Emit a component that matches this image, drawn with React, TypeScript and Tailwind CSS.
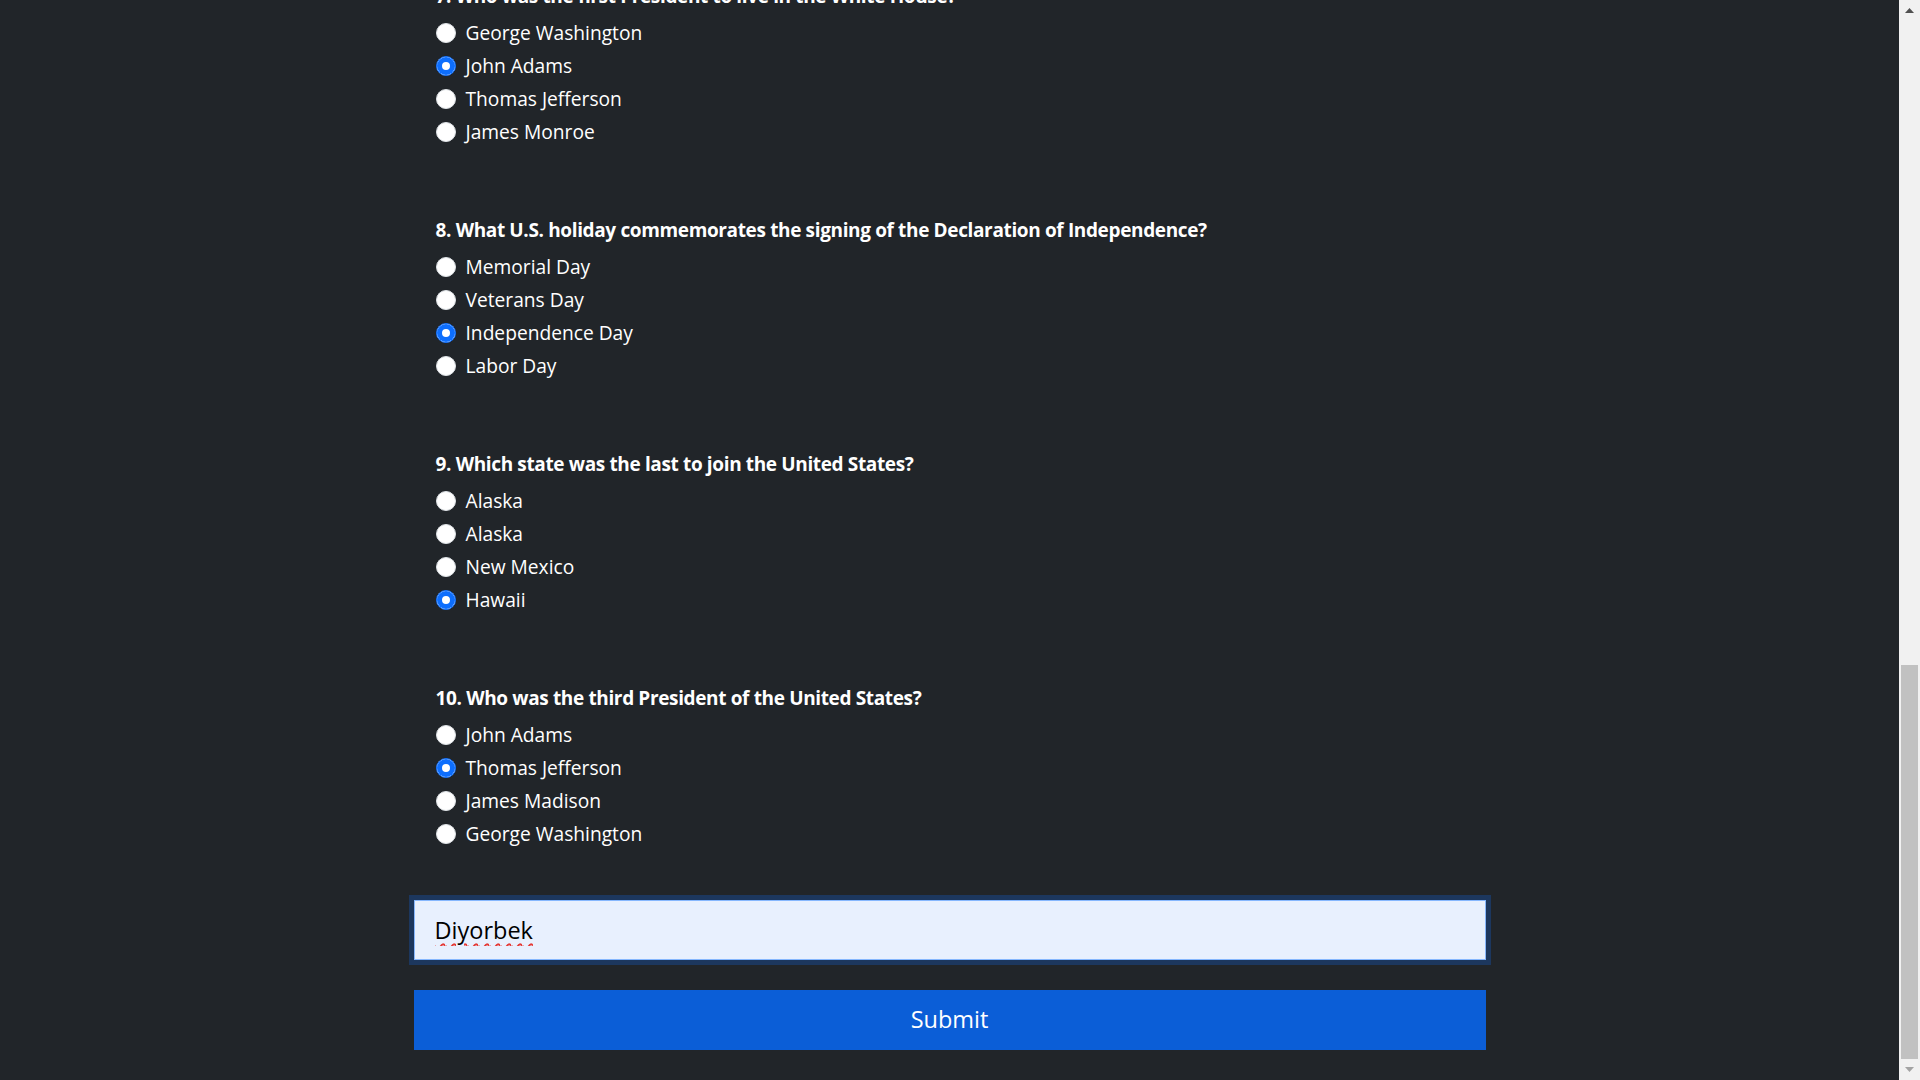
import { useLayoutEffect, useRef, useState } from 'react';

type Question = { q: string; options: string[]; answer: number };

const questions: Question[] = [
  {
    q: 'Who was the first President of the United States?',
    options: ['Thomas Jefferson', 'George Washington', 'John Adams', 'Abraham Lincoln'],
    answer: 1,
  },
  {
    q: 'In what year was the Declaration of Independence signed?',
    options: ['1776', '1789', '1812', '1865'],
    answer: 0,
  },
  {
    q: 'What is the capital of the United States?',
    options: ['New York', 'Philadelphia', 'Washington, D.C.', 'Boston'],
    answer: 2,
  },
  {
    q: 'How many stars are on the U.S. flag?',
    options: ['13', '48', '50', '52'],
    answer: 2,
  },
  {
    q: 'Who wrote the Declaration of Independence?',
    options: ['Benjamin Franklin', 'Thomas Jefferson', 'John Hancock', 'James Madison'],
    answer: 1,
  },
  {
    q: 'Which President issued the Emancipation Proclamation?',
    options: ['Ulysses S. Grant', 'Andrew Johnson', 'Abraham Lincoln', 'James Buchanan'],
    answer: 2,
  },
  {
    q: 'Who was the first President to live in the White House?',
    options: ['George Washington', 'John Adams', 'Thomas Jefferson', 'James Monroe'],
    answer: 1,
  },
  {
    q: 'What U.S. holiday commemorates the signing of the Declaration of Independence?',
    options: ['Memorial Day', 'Veterans Day', 'Independence Day', 'Labor Day'],
    answer: 2,
  },
  {
    q: 'Which state was the last to join the United States?',
    options: ['Alaska', 'Alaska', 'New Mexico', 'Hawaii'],
    answer: 3,
  },
  {
    q: 'Who was the third President of the United States?',
    options: ['John Adams', 'Thomas Jefferson', 'James Madison', 'George Washington'],
    answer: 1,
  },
];

function QuestionBlock({ item, index }: { item: Question; index: number }) {
  const [picked, setPicked] = useState(item.answer);

  return (
    <div className="px-[22px]">
      <div className="mb-[5px] text-[19px] leading-[30px] font-bold tracking-[-0.36px] text-white">
        {index + 1}. {item.q}
      </div>
      {item.options.map((opt, i) => (
        <label key={i} className="flex h-[33px] items-center text-[19.2px] leading-[30px] text-white">
          <input
            type="radio"
            name={`q${index}`}
            checked={picked === i}
            onChange={() => setPicked(i)}
            className="size-5 shrink-0 appearance-none rounded-full border border-[#dee2e6] bg-white checked:border-[#0d6efd] checked:shadow-[inset_0_0_0_5px_#0d6efd]"
          />
          <span className="ml-[10px]">{opt}</span>
        </label>
      ))}
    </div>
  );
}

// page scrollbar, drawn since the headless window hides its own
function ScrollRail() {
  return (
    <div className="flex w-[21px] shrink-0 flex-col bg-[#f1f1f1]">
      <div className="flex h-[21px] items-center justify-center">
        <svg width="9" height="5" viewBox="0 0 9 5">
          <path d="M4.5 0 L9 5 L0 5 Z" fill="#505050" />
        </svg>
      </div>
      <div className="flex-1" />
      <div className="mx-[2px] h-[394px] bg-[#c1c1c1]" />
      <div className="flex h-[21px] items-center justify-center">
        <svg width="9" height="5" viewBox="0 0 9 5">
          <path d="M0 0 L9 0 L4.5 5 Z" fill="#a3a3a3" />
        </svg>
      </div>
    </div>
  );
}

export default function App() {
  const scroller = useRef<HTMLDivElement>(null);
  const [name, setName] = useState('Diyorbek');

  useLayoutEffect(() => {
    const el = scroller.current;
    if (el) el.scrollTop = el.scrollHeight;
  }, []);

  return (
    <div className="flex h-screen bg-[#212529] font-['Open_Sans','Noto_Sans',sans-serif]">
      <div ref={scroller} className="flex-1 overflow-y-scroll [scrollbar-width:none]">
        <div className="mx-auto w-[1072px] pb-[30px]">
          <div className="flex h-[364px] items-center justify-center">
            <h1 className="text-[40px] font-bold text-white">US History Quiz</h1>
          </div>

          <div className="flex flex-col gap-[67px]">
            {questions.map((item, i) => (
              <QuestionBlock key={i} item={item} index={i} />
            ))}
          </div>

          <input
            value={name}
            onChange={(e) => setName(e.target.value)}
            className="mt-[50px] block h-[60px] w-full border border-[#86b7fe] bg-[#e8f0fe] px-5 text-[23.5px] text-black underline decoration-[#e53935] decoration-wavy decoration-2 underline-offset-[4px] shadow-[0_0_0_5px_#1c375e] outline-none"
          />

          <button className="mt-[30px] block h-[60px] w-full bg-[#0b5ed7] text-[23.5px] text-white">
            Submit
          </button>
        </div>
      </div>
      <ScrollRail />
    </div>
  );
}
